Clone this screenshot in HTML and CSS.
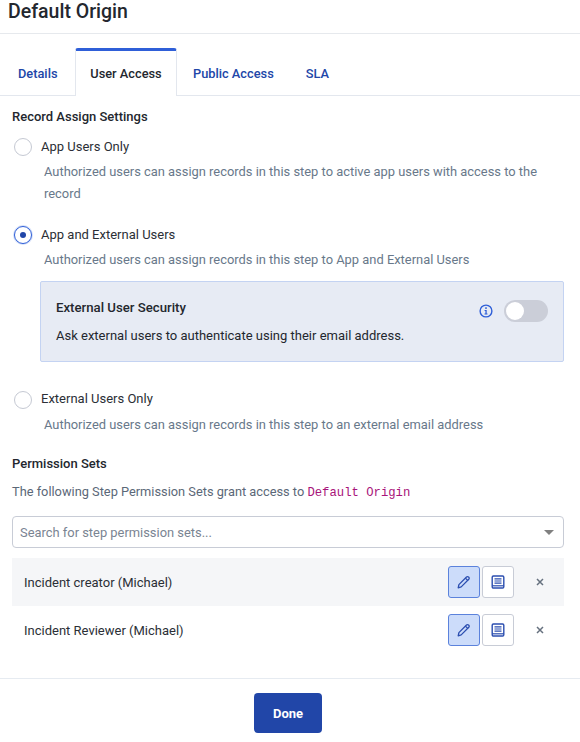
FILE: index.html
```html
<!DOCTYPE html>
<html lang="en">
<head>
    <meta charset="UTF-8">
    <title>Default Origin</title>
    <link rel="stylesheet" href="styles.css">
</head>
<body>
    <div class="dialog">
        <h1 class="dialog-title">Default Origin</h1>

        <div class="tabs">
            <a class="tab">Details</a>
            <a class="tab tab-active">User Access</a>
            <a class="tab">Public Access</a>
            <a class="tab">SLA</a>
        </div>

        <div class="content">
            <h2 class="section-title">Record Assign Settings</h2>

            <div class="option option-first">
                <span class="radio"></span>
                <span class="option-label">App Users Only</span>
            </div>
            <p class="option-help">Authorized users can assign records in this step to active app users with access to the record</p>

            <div class="option option-second">
                <span class="radio radio-checked"></span>
                <span class="option-label">App and External Users</span>
            </div>
            <p class="option-help">Authorized users can assign records in this step to App and External Users</p>

            <div class="security-box">
                <div class="security-head">
                    <div class="security-title">External User Security</div>
                    <svg class="info-icon" width="14" height="14" viewBox="0 0 14 14">
                        <circle cx="7" cy="7" r="5.9" fill="none" stroke="#2f5fd8" stroke-width="1.4"/>
                        <rect x="6.2" y="3.3" width="1.6" height="1.6" fill="#2f5fd8"/>
                        <path d="M5.6 6h2.1v3.4h.8v1H5.5v-1h.9V7h-.8z" fill="#2f5fd8"/>
                    </svg>
                    <span class="toggle"><span class="toggle-knob"></span></span>
                </div>
                <div class="security-text">Ask external users to authenticate using their email address.</div>
            </div>

            <div class="option option-third">
                <span class="radio"></span>
                <span class="option-label">External Users Only</span>
            </div>
            <p class="option-help">Authorized users can assign records in this step to an external email address</p>

            <h2 class="section-title permission-title">Permission Sets</h2>
            <p class="permission-text">The following Step Permission Sets grant access to <code class="step-name">Default Origin</code></p>

            <div class="search-select">
                <span class="search-placeholder">Search for step permission sets...</span>
                <span class="caret"></span>
            </div>

            <div class="perm-row perm-row-shaded">
                <span class="perm-name">Incident creator (Michael)</span>
                <button class="icon-btn icon-btn-active">
                    <svg width="16" height="16" viewBox="0 0 16 16" fill="none" stroke="#2b4eb0" stroke-width="1.3" stroke-linejoin="round">
                        <path d="M2.2 13.8l.7-3.2 7.6-7.6a1.4 1.4 0 0 1 2 0l.3.3a1.4 1.4 0 0 1 0 2l-7.6 7.6z"/>
                        <path d="M9.4 4.1l2.5 2.5"/>
                    </svg>
                </button>
                <button class="icon-btn">
                    <svg width="14" height="14" viewBox="0 0 14 14" fill="none" stroke="#2b4eb0">
                        <rect x="1.2" y="1" width="11.6" height="12" rx="1.2" stroke-width="1.4"/>
                        <path d="M3.5 3.8h7M3.5 6h7M3.5 8.2h7" stroke-width="1.2"/>
                        <path d="M1.2 10.8h11.6" stroke-width="1.2"/>
                    </svg>
                </button>
                <svg class="remove-icon" width="8" height="8" viewBox="0 0 8 8" stroke="#66717f" stroke-width="1.5">
                    <path d="M1 1l6 6M7 1L1 7"/>
                </svg>
            </div>
            <div class="perm-row">
                <span class="perm-name">Incident Reviewer (Michael)</span>
                <button class="icon-btn icon-btn-active">
                    <svg width="16" height="16" viewBox="0 0 16 16" fill="none" stroke="#2b4eb0" stroke-width="1.3" stroke-linejoin="round">
                        <path d="M2.2 13.8l.7-3.2 7.6-7.6a1.4 1.4 0 0 1 2 0l.3.3a1.4 1.4 0 0 1 0 2l-7.6 7.6z"/>
                        <path d="M9.4 4.1l2.5 2.5"/>
                    </svg>
                </button>
                <button class="icon-btn">
                    <svg width="14" height="14" viewBox="0 0 14 14" fill="none" stroke="#2b4eb0">
                        <rect x="1.2" y="1" width="11.6" height="12" rx="1.2" stroke-width="1.4"/>
                        <path d="M3.5 3.8h7M3.5 6h7M3.5 8.2h7" stroke-width="1.2"/>
                        <path d="M1.2 10.8h11.6" stroke-width="1.2"/>
                    </svg>
                </button>
                <svg class="remove-icon" width="8" height="8" viewBox="0 0 8 8" stroke="#66717f" stroke-width="1.5">
                    <path d="M1 1l6 6M7 1L1 7"/>
                </svg>
            </div>
        </div>

        <div class="dialog-footer">
            <button class="btn-done">Done</button>
        </div>
    </div>
</body>
</html>
```

FILE: styles.css
```css
* {
    margin: 0;
    padding: 0;
    box-sizing: border-box;
}

body {
    font-family: Roboto, "Noto Sans", sans-serif;
    background: white;
    color: #22262c;
    font-size: 13px;
}

.dialog {
    width: 580px;
    height: 742px;
    overflow: hidden;
}

.dialog-title {
    height: 34px;
    padding-left: 8px;
    font-size: 19.5px;
    line-height: 24px;
    font-weight: 500;
    color: #23272e;
    border-bottom: 1px solid #e6e9ed;
}

.tabs {
    display: flex;
    height: 48px;
    margin-top: 14px;
    border-bottom: 1px solid #e3e7ee;
}

.tab {
    font-size: 12.8px;
    font-weight: 500;
    color: #2146a8;
    padding: 17px 16px 0;
    line-height: 18px;
    white-space: nowrap;
}

.tabs .tab:first-child {
    width: 75px;
    padding-left: 18px;
    padding-right: 0;
}

.tab-active {
    width: 102px;
    height: 48px;
    text-align: center;
    padding: 14px 0 0;
    color: #23272e;
    background: white;
    border-top: 3px solid #2f5fd8;
    border-left: 1px solid #e3e7ee;
    border-right: 1px solid #e3e7ee;
    border-radius: 3px 3px 0 0;
}

.content {
    padding: 0 16px 0 12px;
    height: 582px;
}

.section-title {
    font-size: 13px;
    line-height: 18px;
    font-weight: 500;
    color: #23272e;
    padding-top: 12px;
    height: 30px;
}

.option {
    display: flex;
    align-items: center;
    height: 20px;
}

.option-first {
    margin-top: 11px;
}

.option-second {
    margin-top: 20px;
}

.option-third {
    margin-top: 28px;
}

.option-third .option-label {
    margin-top: -2px;
}

.radio {
    width: 18px;
    height: 18px;
    margin-left: 2px;
    border: 1px solid #c5c9d3;
    border-radius: 50%;
    background: white;
    display: flex;
    align-items: center;
    justify-content: center;
    flex-shrink: 0;
}

.radio-checked {
    border: 1px solid #2f5fd8;
    box-shadow: 0 0 0 1px #d5e0f8;
}

.radio-checked::after {
    content: '';
    width: 6px;
    height: 6px;
    border-radius: 50%;
    background: #2146a8;
}

.option-label {
    margin-left: 9px;
    font-size: 13px;
    line-height: 18px;
    color: #2b2f36;
}

.option-help {
    margin: 4px 8px 0 32px;
    font-size: 12.9px;
    line-height: 22px;
    color: #68788a;
}

.security-box {
    margin: 10px 0 0 28px;
    width: 524px;
    height: 81px;
    padding: 16px 15px;
    background: #e7ebf4;
    border: 1px solid #c4d3f2;
    border-radius: 2px;
}

.security-head {
    display: flex;
    align-items: flex-start;
    height: 25px;
}

.security-title {
    flex: 1;
    margin-top: 1px;
    font-weight: 500;
    font-size: 13.2px;
    line-height: 18px;
    color: #23272e;
}

.info-icon {
    margin: 6px 11px 0 0;
}

.toggle {
    width: 44px;
    height: 22px;
    margin-top: 2px;
    border-radius: 11px;
    background: #cbced8;
    padding: 2px;
    display: block;
}

.toggle-knob {
    display: block;
    width: 18px;
    height: 18px;
    border-radius: 50%;
    background: white;
}

.security-text {
    margin-top: 4px;
    font-size: 13px;
    line-height: 18px;
    color: #23272e;
}

.permission-title {
    margin-top: 11px;
    padding-top: 8px;
}

.permission-text {
    margin-top: 3px;
    height: 26px;
    line-height: 24px;
    font-size: 12.8px;
    color: #5b6878;
}

.step-name {
    font-family: "Liberation Mono", monospace;
    font-size: 12.25px;
    color: #a8147a;
}

.search-select {
    margin-top: 10px;
    height: 32px;
    width: 552px;
    border: 1px solid #c8ccd6;
    border-radius: 4px;
    padding: 0 7px;
    display: flex;
    align-items: center;
    justify-content: space-between;
}

.search-placeholder {
    font-size: 12.9px;
    color: #7a8492;
}

.caret {
    width: 0;
    height: 0;
    margin-right: 2px;
    border-left: 5px solid transparent;
    border-right: 5px solid transparent;
    border-top: 5px solid #808080;
}

.perm-row {
    width: 552px;
    height: 48px;
    display: flex;
    align-items: center;
    padding: 0 20px 0 12px;
    gap: 2px;
}

.perm-row-shaded {
    margin-top: 10px;
    background: #f5f6f8;
}

.perm-name {
    flex: 1;
    font-size: 13px;
    color: #2b2f36;
}

.icon-btn {
    width: 32px;
    height: 32px;
    background: white;
    border: 1px solid #c8ccd6;
    border-radius: 3px;
    display: flex;
    align-items: center;
    justify-content: center;
}

.icon-btn-active {
    background: #ccdcfa;
    border-color: #5b82dc;
}

.remove-icon {
    margin-left: 20px;
}

.dialog-footer {
    border-top: 1px solid #e6ebf1;
    height: 64px;
    display: flex;
    justify-content: center;
    padding: 14px 4px 0 0;
}

.btn-done {
    width: 68px;
    height: 40px;
    background: #2146a8;
    color: white;
    border: none;
    border-radius: 4px;
    font-family: inherit;
    font-size: 13px;
    font-weight: 700;
}
```
